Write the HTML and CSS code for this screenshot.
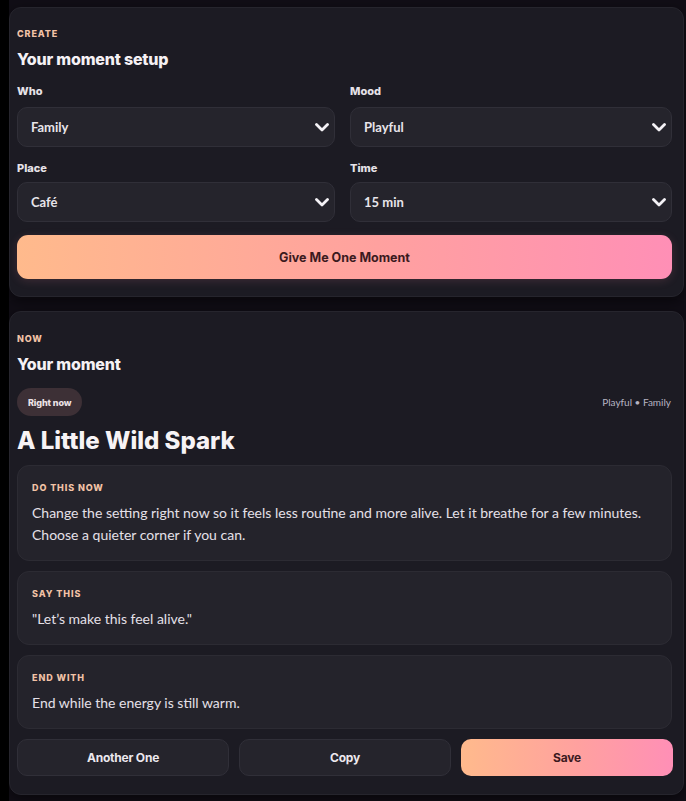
FILE: index.html
```html
<!DOCTYPE html>
<html>
<head>
<meta charset="utf-8">
<link rel="stylesheet" href="styles.css">
</head>
<body>
<div class="page">
  <section class="card setup">
    <div class="eyebrow">CREATE</div>
    <h2 class="title">Your moment setup</h2>
    <div class="grid">
      <div class="field">
        <div class="label">Who</div>
        <div class="select"><span>Family</span><svg class="chev" viewBox="0 0 14 9"><path d="M1.5 1.5 L7 7 L12.5 1.5" /></svg></div>
      </div>
      <div class="field">
        <div class="label">Mood</div>
        <div class="select"><span>Playful</span><svg class="chev" viewBox="0 0 14 9"><path d="M1.5 1.5 L7 7 L12.5 1.5" /></svg></div>
      </div>
      <div class="field">
        <div class="label">Place</div>
        <div class="select"><span>Café</span><svg class="chev" viewBox="0 0 14 9"><path d="M1.5 1.5 L7 7 L12.5 1.5" /></svg></div>
      </div>
      <div class="field">
        <div class="label">Time</div>
        <div class="select"><span>15 min</span><svg class="chev" viewBox="0 0 14 9"><path d="M1.5 1.5 L7 7 L12.5 1.5" /></svg></div>
      </div>
    </div>
    <button class="primary big">Give Me One Moment</button>
  </section>

  <section class="card result">
    <div class="eyebrow">NOW</div>
    <h2 class="title">Your moment</h2>
    <div class="meta-row">
      <span class="pill">Right now</span>
      <span class="meta">Playful • Family</span>
    </div>
    <h1 class="moment">A Little Wild Spark</h1>
    <div class="block">
      <div class="eyebrow">DO THIS NOW</div>
      <p>Change the setting right now so it feels less routine and more alive. Let it breathe for a few minutes. Choose a quieter corner if you can.</p>
    </div>
    <div class="block">
      <div class="eyebrow">SAY THIS</div>
      <p>"Let’s make this feel alive."</p>
    </div>
    <div class="block">
      <div class="eyebrow">END WITH</div>
      <p>End while the energy is still warm.</p>
    </div>
    <div class="actions">
      <button class="ghost">Another One</button>
      <button class="ghost">Copy</button>
      <button class="primary">Save</button>
    </div>
  </section>
</div>
</body>
</html>
```
FILE: styles.css
```css
* { box-sizing: border-box; }
html, body { margin: 0; padding: 0; }
body {
  background: #110e16;
  font-family: Lato, "Noto Sans", sans-serif;
  color: #ece8ee;
  width: 686px;
  height: 801px;
  overflow: hidden;
}
.page {
  border-left: 9px solid #000;
  min-height: 801px;
  padding: 7px 2px 0 0;
  display: flex;
  flex-direction: column;
  gap: 14px;
}
.card {
  background: #1c1b23;
  border: 1px solid #26252d;
  border-radius: 12px;
  padding: 0 11px 0 7px;
  box-shadow: 0 4px 14px rgba(0,0,0,0.5);
}
.setup { height: 290px; padding-top: 20px; }
.result { height: 484px; padding-top: 21px; }
.eyebrow {
  font-family: Inter, sans-serif;
  font-size: 9px;
  font-weight: 800;
  letter-spacing: 0.9px;
  color: #f2c2a6;
  line-height: 12px;
}
.title {
  font-family: Inter, sans-serif;
  margin: 8px 0 0;
  font-size: 16px;
  font-weight: 800;
  color: #f5f1f4;
  line-height: 22px;
  letter-spacing: -0.2px;
}
.grid {
  margin-top: 14px;
  display: grid;
  grid-template-columns: 318px 322px;
  column-gap: 15px;
  row-gap: 14px;
}
.label {
  font-family: Inter, sans-serif;
  font-size: 11px;
  font-weight: 800;
  color: #e6e2e8;
  line-height: 14px;
  margin-bottom: 9px;
}
.select {
  height: 40px;
  background: #25242c;
  border: 1px solid #302f38;
  border-radius: 10px;
  display: flex;
  align-items: center;
  justify-content: space-between;
  padding: 0 5px 0 13px;
  font-size: 13px;
  font-weight: 700;
  color: #e8e4ea;
}
.field:nth-child(n+3) .label { margin-bottom: 7px; }
.chev { width: 14px; height: 9px; }
.chev path { fill: none; stroke: #f4f2f6; stroke-width: 2.8; stroke-linecap: round; stroke-linejoin: round; }
button {
  font-family: Inter, sans-serif;
  border: none;
  cursor: pointer;
}
.primary {
  background: linear-gradient(90deg, #ffba8c 0%, #ffa19f 55%, #ff8fb6 100%);
  color: #3b1a1e;
  font-weight: 700;
  font-size: 12px;
  border-radius: 11px;
}
.big {
  display: block;
  width: 655px;
  height: 44px;
  margin-top: 13px;
  font-size: 12.5px;
  box-shadow: 0 2px 10px rgba(255,140,160,0.15);
}
.meta-row {
  margin-top: 13px;
  display: flex;
  justify-content: space-between;
  align-items: center;
}
.pill {
  font-family: Inter, sans-serif;
  background: #3d3036;
  border-radius: 14px;
  height: 28px;
  padding: 0 11px;
  display: inline-flex;
  align-items: center;
  font-size: 9px;
  font-weight: 800;
  color: #ece2e6;
  letter-spacing: -0.1px;
}
.meta {
  font-size: 10px;
  color: #b6b4c2;
  padding-right: 1px;
}
.moment {
  font-family: Inter, sans-serif;
  margin: 11px 0 0;
  font-size: 24px;
  font-weight: 800;
  color: #f7f3f5;
  line-height: 28px;
  letter-spacing: 0;
}
.block {
  margin-top: 10px;
  background: #24232b;
  border: 1px solid #2c2b33;
  border-radius: 12px;
  padding: 16px 14px 14px;
  width: 655px;
}
.block p {
  margin: 8px 0 0;
  font-size: 14px;
  line-height: 22px;
  color: #e4e0e8;
}
.actions {
  margin-top: 10px;
  display: grid;
  grid-template-columns: 212px 212px 212px;
  column-gap: 10px;
}
.actions button { height: 37px; border-radius: 10px; font-size: 12px; font-weight: 700; letter-spacing: -0.2px; }
.ghost {
  background: #25242c;
  border: 1px solid #302f38 !important;
  color: #ece8ee;
}
```
